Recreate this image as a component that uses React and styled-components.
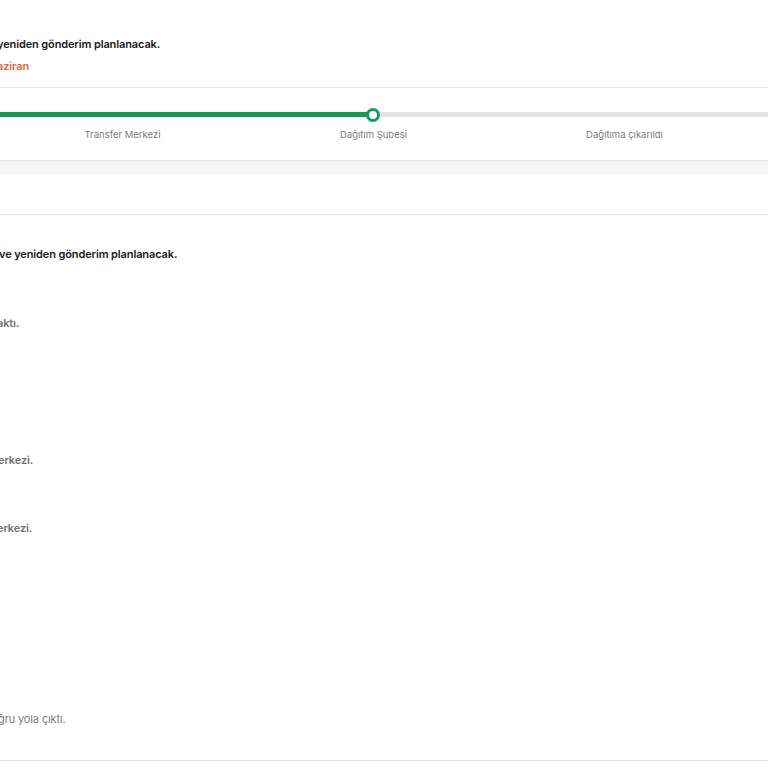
import React from "react";
import styled, { createGlobalStyle } from "styled-components";

const GlobalStyle = createGlobalStyle`
  body {
    margin: 0;
    background: #f7f7f7;
    font-family: Inter, "Noto Sans", sans-serif;
    overflow: hidden;
  }
`;

const Page = styled.div`
  display: flex;
  flex-direction: column;
  width: 768px;
  height: 768px;
  overflow: hidden;
  background: #f7f7f7;
`;

const Card = styled.section`
  flex: ${(p) => (p.$grow ? 1 : "none")};
  background: #fff;
  box-shadow: 0 1px 0 #e6e6e6, 0 2px 4px rgba(0, 0, 0, 0.04);
  margin-bottom: ${(p) => p.$gap || 0}px;
`;

const Summary = styled.div`
  height: 88px;
  padding-top: 36px;
  box-sizing: border-box;
  border-bottom: 1px solid #e9e9e9;
`;

const Line = styled.p`
  margin: 0 0 0 ${(p) => p.$indent || 0}px;
  font-size: 11px;
  line-height: 17px;
  letter-spacing: -0.12px;
  white-space: nowrap;
  font-weight: ${(p) => p.$weight || 600};
  color: ${(p) => p.$color || "#1a1a1a"};
  margin-bottom: ${(p) => p.$after || 0}px;
`;

const Stepper = styled.div`
  height: 72px;
  padding-top: 24px;
  box-sizing: border-box;
`;

const Track = styled.div`
  position: relative;
  height: 5px;
  background: #e3e3e3;
`;

const Fill = styled.div`
  height: 100%;
  background: #189a57;
`;

const Dot = styled.span`
  position: absolute;
  top: 50%;
  width: 14px;
  height: 14px;
  box-sizing: border-box;
  border: 3px solid #189a57;
  border-radius: 50%;
  background: #fff;
  transform: translate(-50%, -50%);
`;

const Labels = styled.div`
  display: grid;
  grid-template-columns: repeat(3, 251px);
  margin: 11px 0 0 -3px;
`;

const Label = styled.span`
  text-align: center;
  font-size: 9.5px;
  line-height: 13px;
  color: #7b7b7b;
`;

const CardHeader = styled.div`
  height: 40px;
  border-bottom: 1px solid #e8e8e8;
  box-shadow: 0 1px 2px rgba(0, 0, 0, 0.03);
`;

const Events = styled.ul`
  list-style: none;
  margin: 0;
  padding: 31px 0 0;
`;

const Event = styled.li`
  min-height: ${(p) => p.$height}px;
  box-sizing: border-box;
  border-bottom: ${(p) => (p.$last ? "1px solid #e2e2e2" : "none")};
`;

const steps = ["Transfer Merkezi", "Dağıtım Şubesi", "Dağıtıma çıkarıldı"];

const events = [
  { text: "ve yeniden gönderim planlanacak.", height: 69, weight: 600, color: "#1a1a1a", indent: -1 },
  { text: "aktı.", height: 137, weight: 600, color: "#707070", indent: -3 },
  { text: "erkezi.", height: 68, weight: 600, color: "#707070", indent: -2 },
  { text: "erkezi.", height: 191, weight: 600, color: "#707070", indent: -3 },
  { text: "ğru yola çıktı.", height: 50, weight: 400, color: "#7d7d7d", indent: -2, last: true },
];

export default function App() {
  const progress = 373;
  return (
    <Page>
      <GlobalStyle />
      <Card $gap={14}>
        <Summary>
          <Line $indent={-3} $after={5}>yeniden gönderim planlanacak.</Line>
          <Line $indent={-3} $color="#e2673f">aziran</Line>
        </Summary>
        <Stepper>
          <Track>
            <Fill style={{ width: progress }} />
            <Dot style={{ left: progress }} />
          </Track>
          <Labels>
            {steps.map((s) => (
              <Label key={s}>{s}</Label>
            ))}
          </Labels>
        </Stepper>
      </Card>
      <Card $grow>
        <CardHeader />
        <Events>
          {events.map((e, i) => (
            <Event key={i} $height={e.height} $last={e.last}>
              <Line $indent={e.indent} $weight={e.weight} $color={e.color}>
                {e.text}
              </Line>
            </Event>
          ))}
        </Events>
      </Card>
    </Page>
  );
}
